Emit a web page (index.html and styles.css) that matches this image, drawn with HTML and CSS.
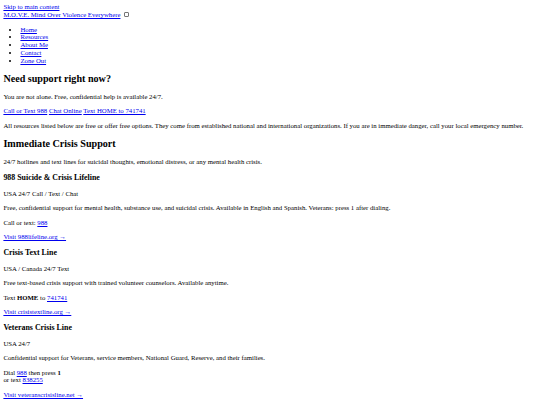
FILE: index.html
```html
<!DOCTYPE html>
<html lang="en">
<head>
<meta charset="utf-8">
<title>M.O.V.E. Mind Over Violence Everywhere</title>
<link rel="stylesheet" href="styles.css">
</head>
<body class="page-body">
<a class="skip-link" href="#main">Skip to main content</a>
<header class="site-header">
  <a class="logo" href="#">M.O.V.E. Mind Over Violence Everywhere</a>
  <input type="checkbox" class="menu-toggle" id="menu-toggle" aria-label="Toggle menu">
  <nav class="site-nav">
    <ul class="nav-list">
      <li><a href="#">Home</a></li>
      <li><a href="#">Resources</a></li>
      <li><a href="#">About Me</a></li>
      <li><a href="#">Contact</a></li>
      <li><a href="#">Zone Out</a></li>
    </ul>
  </nav>
</header>
<main id="main" class="main">
  <section class="urgent">
    <h2 class="title">Need support right now?</h2>
    <p class="text">You are not alone. Free, confidential help is available 24/7.</p>
    <p class="text"><a href="#">Call or Text 988</a> <a href="#">Chat Online</a> <a href="#">Text HOME to 741741</a></p>
  </section>
  <p class="text">All resources listed below are free or offer free options. They come from established national and international organizations. If you are in immediate danger, call your local emergency number.</p>
  <section class="crisis">
    <h2 class="title">Immediate Crisis Support</h2>
    <p class="text">24/7 hotlines and text lines for suicidal thoughts, emotional distress, or any mental health crisis.</p>
    <article>
      <h3 class="subtitle">988 Suicide &amp; Crisis Lifeline</h3>
      <p class="text">USA 24/7 Call / Text / Chat</p>
      <p class="text">Free, confidential support for mental health, substance use, and suicidal crisis. Available in English and Spanish. Veterans: press 1 after dialing.</p>
      <p class="text">Call or text: <a href="#">988</a></p>
      <p class="text"><a href="#">Visit 988lifeline.org →</a></p>
    </article>
    <article>
      <h3 class="subtitle">Crisis Text Line</h3>
      <p class="text">USA / Canada 24/7 Text</p>
      <p class="text">Free text-based crisis support with trained volunteer counselors. Available anytime.</p>
      <p class="text">Text <strong>HOME</strong> to <a href="#">741741</a></p>
      <p class="text"><a href="#">Visit crisistextline.org →</a></p>
    </article>
    <article>
      <h3 class="subtitle">Veterans Crisis Line</h3>
      <p class="text">USA 24/7</p>
      <p class="text">Confidential support for Veterans, service members, National Guard, Reserve, and their families.</p>
      <p class="text">Dial <a href="#">988</a> then press <strong>1</strong><br>or text <a href="#">838255</a></p>
      <p class="text"><a href="#">Visit veteranscrisisline.net →</a></p>
    </article>
  </section>
</main>
</body>
</html>
```
FILE: styles.css
```css
.page-body {
  margin: 3.4px;
  font-family: "Liberation Serif", "Times New Roman", serif;
  font-size: 6.75px;
  line-height: 7.76px;
}
.menu-toggle {
  -webkit-appearance: none;
  appearance: none;
  box-sizing: border-box;
  width: 5.2px;
  height: 5.2px;
  margin: 0 1px 0 2px;
  border: 0.6px solid #767676;
  border-radius: 1px;
  background: #fff;
  vertical-align: -0.3px;
}
.nav-list {
  margin: 6.75px 0;
  padding-left: 17px;
}
.title {
  font-size: 10.125px;
  line-height: 11.6px;
  margin: 8.4px 0;
}
.subtitle {
  font-size: 7.9px;
  line-height: 9.1px;
  margin: 7.3px 0;
}
.text {
  margin: 6.75px 0;
}
```
